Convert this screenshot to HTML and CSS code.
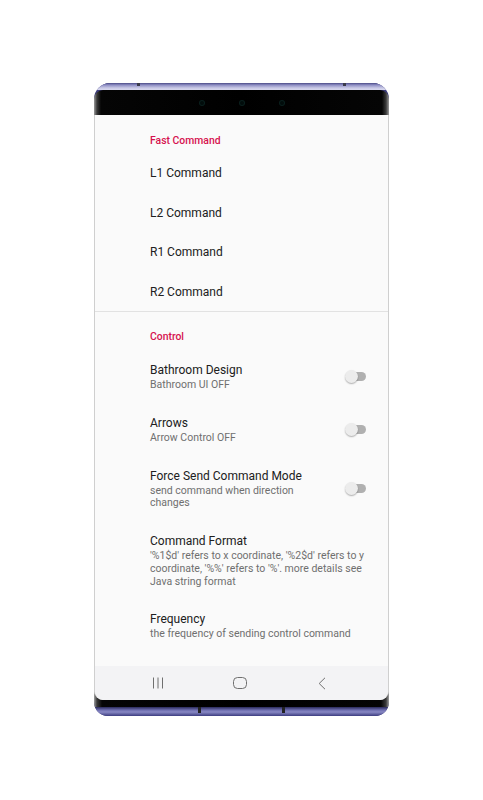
FILE: index.html
```html
<!DOCTYPE html>
<html>
<head>
<meta charset="utf-8">
<link rel="stylesheet" href="styles.css">
</head>
<body>
<div class="phone">
  <div class="rim-top"><span class="mark mark-t1"></span><span class="mark mark-t2"></span></div>
  <div class="bezel-top"><span class="cam"></span><span class="cam"></span><span class="cam"></span></div>
  <div class="body">
    <div class="screen">
      <div class="content">
        <div class="cat">Fast Command</div>
        <div class="row simple"><div class="title">L1 Command</div></div>
        <div class="row simple"><div class="title">L2 Command</div></div>
        <div class="row simple"><div class="title">R1 Command</div></div>
        <div class="row simple"><div class="title">R2 Command</div></div>
        <div class="divider"></div>
        <div class="cat cat2">Control</div>
        <div class="row pref">
          <div class="text"><div class="title">Bathroom Design</div><div class="summary">Bathroom UI OFF</div></div>
          <div class="switch"><span class="track"></span><span class="thumb"></span></div>
        </div>
        <div class="row pref">
          <div class="text"><div class="title">Arrows</div><div class="summary">Arrow Control OFF</div></div>
          <div class="switch"><span class="track"></span><span class="thumb"></span></div>
        </div>
        <div class="row pref">
          <div class="text"><div class="title">Force Send Command Mode</div><div class="summary">send command when direction changes</div></div>
          <div class="switch"><span class="track"></span><span class="thumb"></span></div>
        </div>
        <div class="row pref wide">
          <div class="text"><div class="title">Command Format</div><div class="summary">'%1$d' refers to x coordinate, '%2$d' refers to y coordinate, '%%' refers to '%'. more details see Java string format</div></div>
        </div>
        <div class="row pref wide">
          <div class="text"><div class="title">Frequency</div><div class="summary">the frequency of sending control command</div></div>
        </div>
      </div>
      <div class="navbar">
        <span class="nav-icon"><svg width="14" height="12" viewBox="0 0 14 12"><path d="M2.5 0.5V11.5M7 0.5V11.5M11.5 0.5V11.5" stroke="#6f6f6f" stroke-width="1" fill="none"/></svg></span>
        <span class="nav-icon"><svg width="14" height="12" viewBox="0 0 14 12"><rect x="0.5" y="0.5" width="13" height="11" rx="4" stroke="#6f6f6f" stroke-width="1" fill="none"/></svg></span>
        <span class="nav-icon"><svg width="8" height="13" viewBox="0 0 8 13"><path d="M7 0.8L1.2 6.5L7 12.2" stroke="#6f6f6f" stroke-width="1" fill="none"/></svg></span>
      </div>
    </div>
    <div class="bezel-bottom"></div>
  </div>
  <div class="rim-bottom"><span class="mark mark-b1"></span><span class="mark mark-b2"></span></div>
</div>
</body>
</html>
```
FILE: styles.css
```css
html, body {
  margin: 0;
  padding: 0;
  background: #ffffff;
}
body {
  font-family: Roboto, "Noto Sans", sans-serif;
}
.phone {
  width: 295px;
  margin: 83px auto 0;
  border-radius: 16px 16px 14px 14px;
  overflow: hidden;
  background: #3c3c7a;
  display: flex;
  flex-direction: column;
}
.rim-top {
  height: 7px;
  background: linear-gradient(#4a4a86 0, #8e8ec4 2px, #c9c9e6 5px, #d8d8ee 7px);
  display: flex;
}
.mark {
  display: block;
  width: 3px;
  background: #3a3a4a;
}
.mark-t1 { margin-left: 43px; height: 3px; }
.mark-t2 { margin-left: 203px; height: 3px; }
.bezel-top {
  height: 25px;
  background: linear-gradient(to right, #9a9a9a 0, #3a3a3a 3px, #050505 7px, #000 50%, #050505 calc(100% - 7px), #3a3a3a calc(100% - 3px), #9a9a9a 100%);
  border-radius: 9px 9px 0 0;
  display: flex;
  justify-content: center;
  align-items: center;
  gap: 36px;
}
.cam {
  width: 4px;
  height: 4px;
  border-radius: 50%;
  background: #020c0b;
  box-shadow: 0 0 0 1px #0a1f1d;
}
.body {
  background: linear-gradient(to right, #a0a0a0 0, #3a3a3a 3px, #050505 8px, #000 50%, #050505 calc(100% - 8px), #3a3a3a calc(100% - 3px), #a0a0a0 100%);
}
.screen {
  border-left: 1px solid #cfcfcf;
  border-right: 1px solid #cfcfcf;
  background: #fafafa;
  border-radius: 0 0 9px 9px;
  overflow: hidden;
}
.content {
  height: 551px;
  overflow: hidden;
}
.cat {
  box-sizing: border-box;
  height: 38px;
  padding: 20px 0 0 55px;
  font-size: 10.4px;
  line-height: 12px;
  font-weight: 500;
  color: #d6124f;
}
.cat2 {
  height: 37px;
  padding-top: 19px;
}
.row {
  display: flex;
  align-items: center;
  padding-left: 55px;
}
.row.simple {
  height: 39.5px;
  padding-top: 1px;
  box-sizing: border-box;
}
.row.pref {
  padding-top: 13px;
  padding-bottom: 10px;
  padding-right: 22px;
}
.row.wide {
  padding-right: 14px;
}
.text {
  flex: 1;
  min-width: 0;
}
.title {
  font-size: 12px;
  line-height: 16px;
  color: #202020;
}
.summary {
  margin-top: 1px;
  font-size: 10.5px;
  line-height: 12.75px;
  color: #6f6f6f;
}
.divider {
  height: 1px;
  background: #e2e2e2;
}
.switch {
  position: relative;
  flex: none;
  width: 21px;
  height: 13px;
  margin-left: 16px;
  margin-top: -1px;
}
.track {
  position: absolute;
  left: 2px;
  top: 2px;
  width: 19px;
  height: 9px;
  border-radius: 4.5px;
  background: #b0b0b0;
}
.thumb {
  position: absolute;
  left: 0;
  top: 0;
  width: 13px;
  height: 13px;
  border-radius: 50%;
  background: #ececec;
  box-shadow: 0 1px 1.5px rgba(0, 0, 0, 0.3);
}
.navbar {
  height: 34px;
  background: #f3f3f5;
  display: flex;
  align-items: center;
  padding-left: 55px;
  gap: 66px;
}
.nav-icon {
  width: 16px;
  height: 13px;
  display: flex;
  align-items: center;
  justify-content: center;
}
.bezel-bottom {
  height: 7px;
}
.rim-bottom {
  height: 9px;
  background: linear-gradient(#2a2a5a 0, #6c6cae 3px, #8888c4 5px, #3c3c80 9px);
  display: flex;
}
.mark-b1 { margin-left: 104px; height: 6px; background: #222; }
.mark-b2 { margin-left: 81px; height: 6px; background: #222; }
```
